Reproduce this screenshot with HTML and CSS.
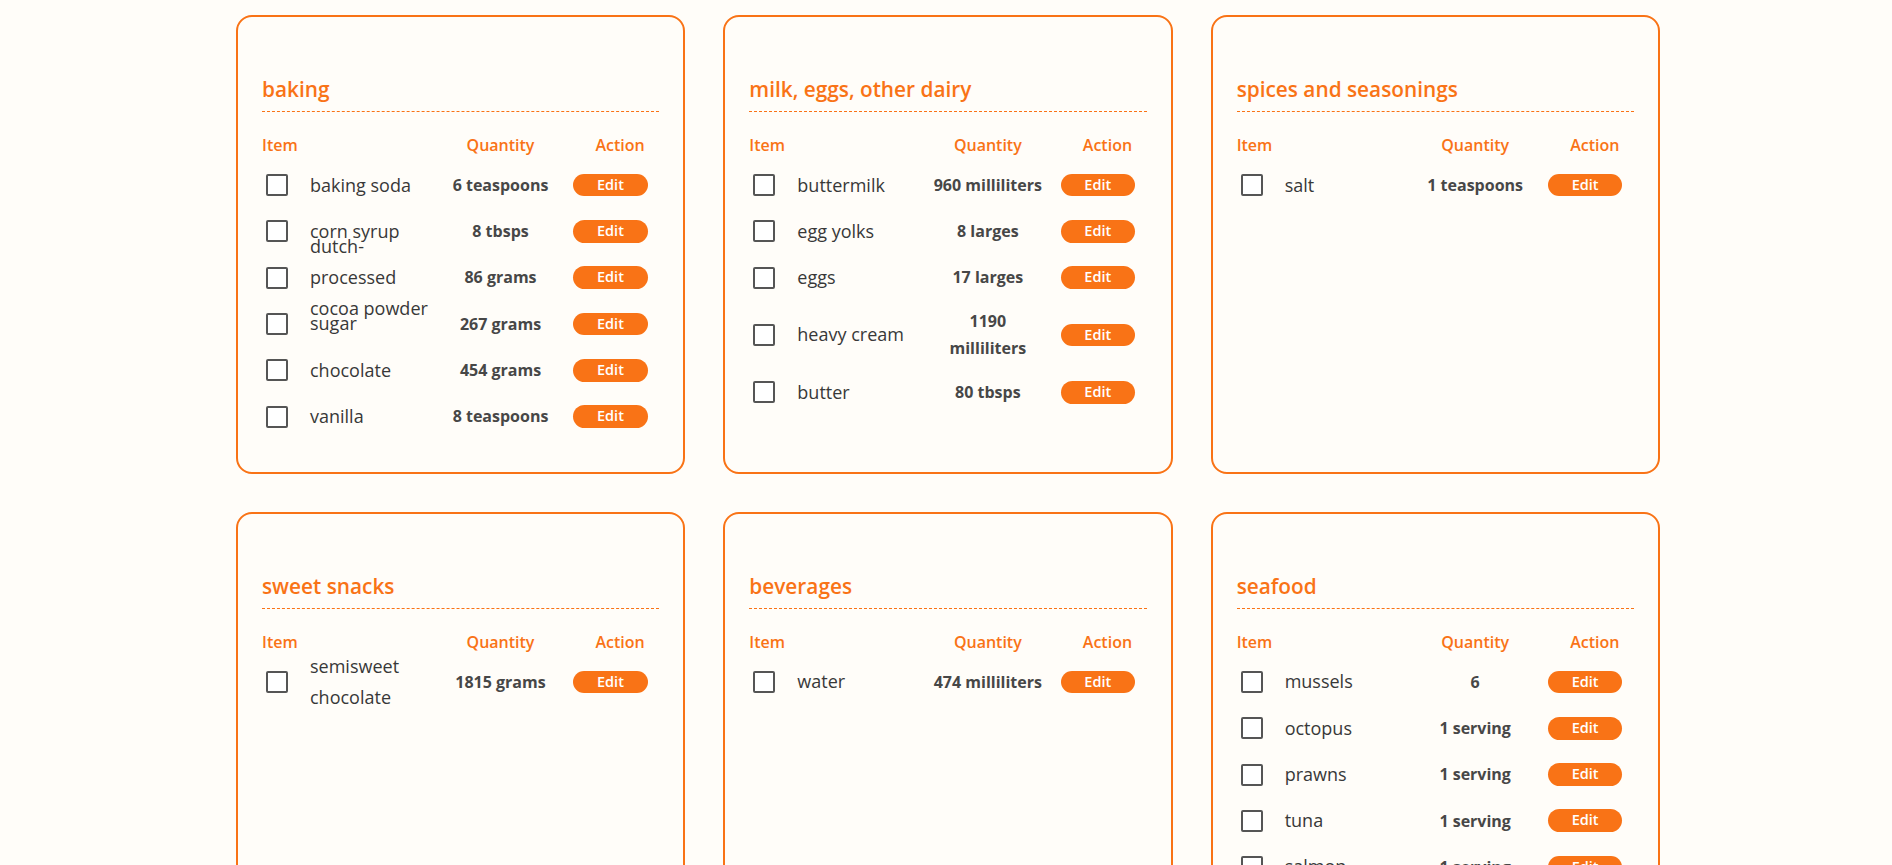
FILE: index.html
```html
<!DOCTYPE html>
<html lang="en">
<head>
<meta charset="utf-8">
<title>Shopping list</title>
<link rel="stylesheet" href="styles.css">
</head>
<body>
<main class="board">

  <section class="card">
    <h2 class="card-title">baking</h2>
    <div class="list-head"><span class="h-item">Item</span><span class="h-qty">Quantity</span><span class="h-action">Action</span></div>
    <div class="row"><span class="check"></span><div class="name"><span>baking soda</span></div><div class="qty">6 teaspoons</div><div class="act"><button class="edit">Edit</button></div></div>
    <div class="row"><span class="check"></span><div class="name"><span>corn syrup</span></div><div class="qty">8 tbsps</div><div class="act"><button class="edit">Edit</button></div></div>
    <div class="row"><span class="check"></span><div class="name"><span>dutch-processed cocoa powder</span></div><div class="qty">86 grams</div><div class="act"><button class="edit">Edit</button></div></div>
    <div class="row"><span class="check"></span><div class="name"><span>sugar</span></div><div class="qty">267 grams</div><div class="act"><button class="edit">Edit</button></div></div>
    <div class="row"><span class="check"></span><div class="name"><span>chocolate</span></div><div class="qty">454 grams</div><div class="act"><button class="edit">Edit</button></div></div>
    <div class="row"><span class="check"></span><div class="name"><span>vanilla</span></div><div class="qty">8 teaspoons</div><div class="act"><button class="edit">Edit</button></div></div>
  </section>

  <section class="card">
    <h2 class="card-title">milk, eggs, other dairy</h2>
    <div class="list-head"><span class="h-item">Item</span><span class="h-qty">Quantity</span><span class="h-action">Action</span></div>
    <div class="row"><span class="check"></span><div class="name"><span>buttermilk</span></div><div class="qty">960 milliliters</div><div class="act"><button class="edit">Edit</button></div></div>
    <div class="row"><span class="check"></span><div class="name"><span>egg yolks</span></div><div class="qty">8 larges</div><div class="act"><button class="edit">Edit</button></div></div>
    <div class="row"><span class="check"></span><div class="name"><span>eggs</span></div><div class="qty">17 larges</div><div class="act"><button class="edit">Edit</button></div></div>
    <div class="row"><span class="check"></span><div class="name"><span>heavy cream</span></div><div class="qty">1190 milliliters</div><div class="act"><button class="edit">Edit</button></div></div>
    <div class="row"><span class="check"></span><div class="name"><span>butter</span></div><div class="qty">80 tbsps</div><div class="act"><button class="edit">Edit</button></div></div>
  </section>

  <section class="card">
    <h2 class="card-title">spices and seasonings</h2>
    <div class="list-head"><span class="h-item">Item</span><span class="h-qty">Quantity</span><span class="h-action">Action</span></div>
    <div class="row"><span class="check"></span><div class="name"><span>salt</span></div><div class="qty">1 teaspoons</div><div class="act"><button class="edit">Edit</button></div></div>
  </section>

  <section class="card">
    <h2 class="card-title">sweet snacks</h2>
    <div class="list-head"><span class="h-item">Item</span><span class="h-qty">Quantity</span><span class="h-action">Action</span></div>
    <div class="row"><span class="check"></span><div class="name"><span>semisweet chocolate</span></div><div class="qty">1815 grams</div><div class="act"><button class="edit">Edit</button></div></div>
  </section>

  <section class="card">
    <h2 class="card-title">beverages</h2>
    <div class="list-head"><span class="h-item">Item</span><span class="h-qty">Quantity</span><span class="h-action">Action</span></div>
    <div class="row"><span class="check"></span><div class="name"><span>water</span></div><div class="qty">474 milliliters</div><div class="act"><button class="edit">Edit</button></div></div>
  </section>

  <section class="card">
    <h2 class="card-title">seafood</h2>
    <div class="list-head"><span class="h-item">Item</span><span class="h-qty">Quantity</span><span class="h-action">Action</span></div>
    <div class="row"><span class="check"></span><div class="name"><span>mussels</span></div><div class="qty">6</div><div class="act"><button class="edit">Edit</button></div></div>
    <div class="row"><span class="check"></span><div class="name"><span>octopus</span></div><div class="qty">1 serving</div><div class="act"><button class="edit">Edit</button></div></div>
    <div class="row"><span class="check"></span><div class="name"><span>prawns</span></div><div class="qty">1 serving</div><div class="act"><button class="edit">Edit</button></div></div>
    <div class="row"><span class="check"></span><div class="name"><span>tuna</span></div><div class="qty">1 serving</div><div class="act"><button class="edit">Edit</button></div></div>
    <div class="row"><span class="check"></span><div class="name"><span>salmon</span></div><div class="qty">1 serving</div><div class="act"><button class="edit">Edit</button></div></div>
    <div class="row"><span class="check"></span><div class="name"><span>scallops</span></div><div class="qty">1 serving</div><div class="act"><button class="edit">Edit</button></div></div>
  </section>

</main>
</body>
</html>
```

FILE: styles.css
```css
html, body {
  margin: 0;
  background: #fffdf9;
}

body {
  font-family: "Open Sans", "Noto Sans", sans-serif;
  color: #3d3d3d;
}

.board {
  display: grid;
  grid-template-columns: repeat(3, 449.33px);
  column-gap: 38px;
  row-gap: 38px;
  padding: 15px 0 40px 236px;
}

.card {
  border: 2px solid #f97316;
  border-radius: 16px;
  padding: 57px 24px 32px;
  background: #fffdf9;
}

.card-title {
  margin: 0;
  padding-bottom: 7px;
  border-bottom: 1px dashed #f97316;
  font-size: 20.8px;
  font-weight: 600;
  line-height: 30px;
  color: #f97316;
}

.list-head,
.row {
  display: grid;
  grid-template-columns: 48px 133.5px 114px 1fr;
  align-items: center;
}

.list-head {
  margin-top: 16px;
  height: 34px;
  font-size: 16px;
  font-weight: 600;
  line-height: 34px;
  color: #f97316;
}

.h-item {
  grid-column: 1 / 3;
}

.h-qty {
  text-align: center;
}

.h-action {
  padding-left: 38px;
}

.row {
  padding: 7.5px 0;
}

.check {
  box-sizing: border-box;
  width: 22px;
  height: 22px;
  margin-left: 4px;
  border: 2px solid #555;
  border-radius: 2px;
  background: #fff;
}

.name {
  height: 31.3px;
  display: flex;
  align-items: center;
  padding-right: 14px;
  font-size: 18px;
  line-height: 31.3px;
  color: #383838;
}

.name span {
  display: block;
}

.qty {
  text-align: center;
  font-size: 16px;
  font-weight: 700;
  line-height: 26.6px;
  color: #474747;
}

.act {
  padding-left: 15.8px;
}

.edit {
  display: block;
  width: 74.3px;
  height: 22.7px;
  padding: 0;
  border: 0;
  border-radius: 12px;
  background: #f97316;
  color: #fff;
  font-family: "Open Sans", sans-serif;
  font-size: 14.5px;
  font-weight: 600;
  line-height: 22.7px;
}
```
